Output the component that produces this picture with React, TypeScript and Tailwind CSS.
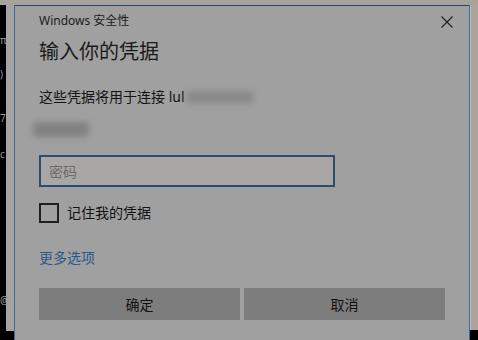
import React from "react";

const font = { fontFamily: '"Noto Sans", "Noto Sans CJK SC", sans-serif' };

const CloseIcon = () => (
  <svg width="12" height="12" viewBox="0 0 12 12" className="block">
    <path d="M0.5 0.5 L11.5 11.5 M11.5 0.5 L0.5 11.5" stroke="#1e1e1e" strokeWidth="1.1" fill="none" />
  </svg>
);

const LeftEdge: React.FC = () => (
  <div className="flex w-[14px] shrink-0 flex-col">
    <div className="flex flex-1">
      <div className="relative w-[6px] bg-black text-[10px] leading-none text-[#9a9a9a]" style={font}>
        <span className="absolute left-0 top-[30px]">π</span>
        <span className="absolute left-0 top-[64px]">)</span>
        <span className="absolute left-0 top-[108px]">7</span>
        <span className="absolute left-0 top-[144px]">c</span>
        <span className="absolute left-0 top-[290px]">@</span>
      </div>
      <div className="w-[8px] bg-[#a4a4a4]" />
    </div>
    <div className="h-[9px] bg-black" />
  </div>
);

const RightEdge: React.FC = () => (
  <div className="flex w-[8px] shrink-0 flex-col">
    <div className="flex-1 border-l border-[#c0bbb6] bg-[#a8a49f]" />
    <div className="h-[10px] bg-black" />
  </div>
);

export default function App() {
  return (
    <div className="flex h-[340px] w-[478px] flex-col overflow-hidden bg-black" style={font}>
      <div className="h-[5px] shrink-0 bg-[#a6a29e]" />
      <div className="flex flex-1">
        <LeftEdge />
        <div className="flex flex-1 flex-col border-l border-r border-t border-l-[#3d6c98] border-r-[#3d6c98] border-t-[#2a4660] bg-[#a0a0a0] pl-[24px]">
          <div className="flex items-start justify-between pr-[16px] pt-[7px]">
            <div className="text-[12px] leading-[16px] text-[#1c1c1c]">Windows 安全性</div>
            <div className="pt-[3px]">
              <CloseIcon />
            </div>
          </div>
          <div className="mt-[10px] text-[20px] leading-[26px] text-[#1a1a1a]">输入你的凭据</div>
          <div className="mt-[22px] flex h-[20px] items-center text-[14px] leading-[20px] text-[#141414]">
            <span>这些凭据将用于连接 lul</span>
            <span className="ml-[2px] h-[12px] w-[66px] bg-[#888888] blur-[3px]" />
          </div>
          <div className="mt-[15px] h-[15px] w-[56px] -translate-x-[6px] rounded-sm bg-[#818181] blur-[3px]" />
          <div className="mt-[18px] flex h-[32px] w-[296px] items-center border-2 border-[#2c4c6c] bg-[#a9a7a5] pl-[8px] text-[14px] text-[#6a6a6a]">
            密码
          </div>
          <div className="mt-[16px] flex h-[20px] items-center gap-[8px]">
            <div className="h-[20px] w-[20px] border-2 border-[#1f1f1f]" />
            <span className="text-[14px] leading-[20px] text-[#121212]">记住我的凭据</span>
          </div>
          <div className="mt-[25px] text-[14px] leading-[20px] text-[#2a5a8a]">更多选项</div>
          <div className="mt-[20px] flex gap-[4px]">
            <div className="flex h-[32px] w-[201px] items-center justify-center bg-[#7d7d7d] text-[14px] text-[#121212]">确定</div>
            <div className="flex h-[32px] w-[201px] items-center justify-center bg-[#7d7d7d] text-[14px] text-[#121212]">取消</div>
          </div>
        </div>
        <RightEdge />
      </div>
    </div>
  );
}
